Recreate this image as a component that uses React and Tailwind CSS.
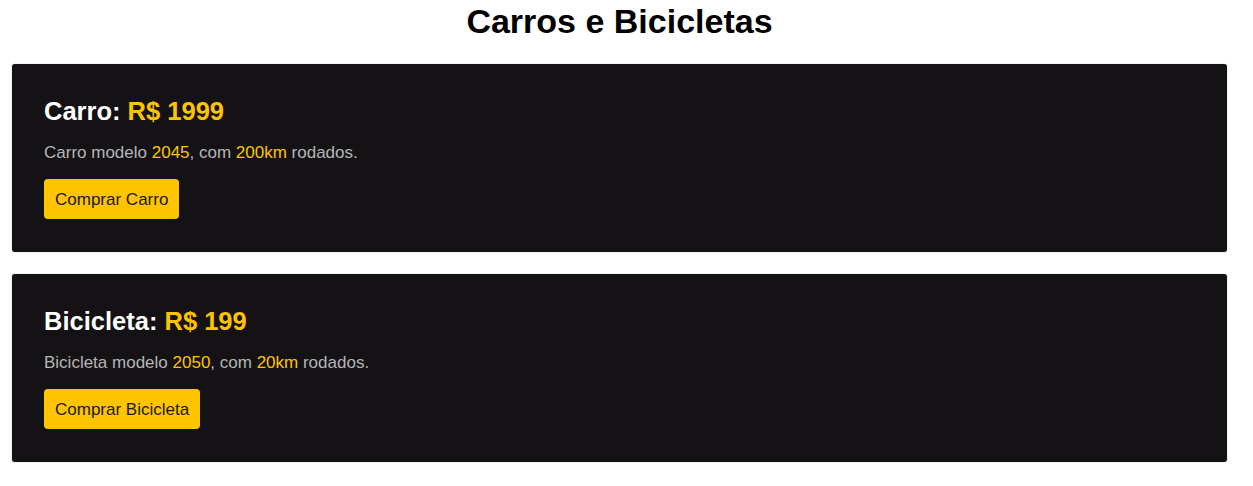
const items = [
  { name: "Carro", price: 1999, model: 2045, km: "200km" },
  { name: "Bicicleta", price: 199, model: 2050, km: "20km" },
];

function Card({ item }) {
  return (
    <div className="bg-[#141215] rounded-[3px] px-8 pt-[33px] pb-[33px] shadow-[0_0_1px_rgba(0,0,0,0.5)]">
      <h2 className="text-[25.5px] font-bold text-white leading-[29px]">
        {item.name}: <span className="text-[#ffc400]">R$ {item.price}</span>
      </h2>
      <p className="mt-[17px] text-[17px] leading-[20px] text-[#b5b5b5]">
        {item.name} modelo <span className="text-[#ffc400]">{item.model}</span>, com{" "}
        <span className="text-[#ffc400]">{item.km}</span> rodados.
      </p>
      <button className="mt-[16px] bg-[#ffc400] text-[#1a1a1a] text-[17px] leading-[20px] px-[11px] pt-[11px] pb-[9px] rounded-[4px]">
        Comprar {item.name}
      </button>
    </div>
  );
}

export default function App() {
  return (
    <div className="min-h-screen bg-white font-['Liberation_Sans',Arial,sans-serif]">
      <div className="ml-3 w-[1215px] pt-[2px]">
        <h1 className="text-[34px] font-bold text-black text-center leading-[39px]">
          Carros e Bicicletas
        </h1>
        <div className="mt-[23px] flex flex-col gap-[22px]">
          {items.map((item) => (
            <Card key={item.name} item={item} />
          ))}
        </div>
      </div>
    </div>
  );
}
